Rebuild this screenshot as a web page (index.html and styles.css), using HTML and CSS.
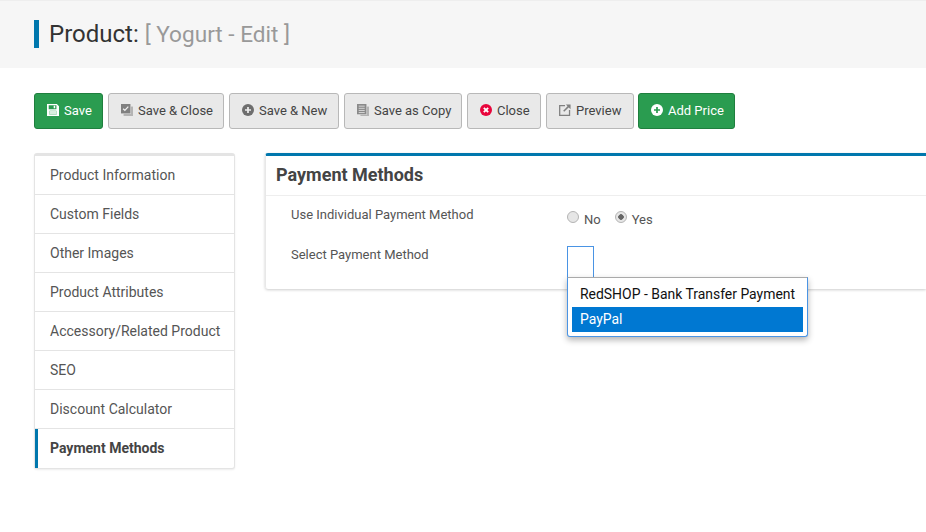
FILE: index.html
```html
<!DOCTYPE html>
<html lang="en">
<head>
    <meta charset="UTF-8">
    <meta name="viewport" content="width=device-width, initial-scale=1.0">
    <title>Product: Yogurt - Edit</title>
    <link rel="stylesheet" href="styles.css">
</head>
<body>
    <header class="page-head">
        <h1 class="page-title">Product: <small>[ Yogurt - Edit ]</small></h1>
    </header>

    <div class="toolbar">
        <button class="btn btn-green btn-save">
            <svg class="ico" viewBox="0 0 14 14"><path fill="#fff" fill-rule="evenodd" d="M0 0h11.500L14 2.500V14H0zM2 1.500v4.500h9V1.500zM3 8v4.500h8V8z"/><path fill="#fff" d="M7.800 2h1.800v3H7.800z"/><path fill="#d8efdf" d="M3 8h8v4.500H3z"/></svg>
            Save
        </button>
        <button class="btn btn-save-close">
            <svg class="ico" viewBox="0 0 14 14"><path fill="#b4b4b4" d="M3 3h11v11H3z"/><path fill="#e9e9e9" d="M0 0h11.500v11.500H0z"/><path fill="#808080" d="M0 0h11v11H0z"/><path fill="none" stroke="#f0f0f0" stroke-width="1.500" d="M2.500 5.500l2 2 4-4.500"/></svg>
            Save &amp; Close
        </button>
        <button class="btn btn-save-new">
            <svg class="ico" viewBox="0 0 14 14"><circle cx="7" cy="7" r="7" fill="#6e6e6e"/><path fill="#eee" d="M6 3.500h2V6h2.500v2H8v2.500H6V8H3.500V6H6z"/></svg>
            Save &amp; New
        </button>
        <button class="btn btn-copy">
            <svg class="ico" viewBox="0 0 14 14"><path fill="#b4b4b4" d="M4 3h10v11H4z"/><path fill="#e9e9e9" d="M0 0h11.500v12.500H0z"/><path fill="#8a8a8a" d="M0 0h11v12H0z"/><path stroke="#e4e4e4" d="M2 2.500h7M2 5h7M2 7.500h7M2 10h7"/></svg>
            Save as Copy
        </button>
        <button class="btn btn-close">
            <svg class="ico" viewBox="0 0 14 14"><circle cx="7" cy="7" r="7" fill="#e8063c"/><path stroke="#fff" stroke-width="2.200" d="M4.500 4.500l5 5M9.500 4.500l-5 5"/></svg>
            Close
        </button>
        <button class="btn btn-preview">
            <svg class="ico" viewBox="0 0 14 14"><path fill="none" stroke="#808080" stroke-width="1.500" d="M7 1.800H.8v11.500h11.500V7"/><path fill="none" stroke="#808080" stroke-width="1.800" d="M5.500 8.500L11.500 2.500"/><path fill="#808080" d="M8 .5h5.500V6z"/></svg>
            Preview
        </button>
        <button class="btn btn-green btn-price">
            <svg class="ico" viewBox="0 0 14 14"><circle cx="7" cy="7" r="7" fill="#fff"/><path fill="#2a9c50" d="M6 3.500h2V6h2.500v2H8v2.500H6V8H3.500V6H6z"/></svg>
            Add Price
        </button>
    </div>

    <main class="content">
        <ul class="tabs">
            <li>Product Information</li>
            <li>Custom Fields</li>
            <li>Other Images</li>
            <li>Product Attributes</li>
            <li>Accessory/Related Product</li>
            <li>SEO</li>
            <li>Discount Calculator</li>
            <li class="active">Payment Methods</li>
        </ul>

        <section class="panel">
            <h2 class="panel-title">Payment Methods</h2>
            <div class="panel-body">
                <div class="row row-radio">
                    <label class="row-label">Use Individual Payment Method</label>
                    <div class="radios">
                        <span class="radio"></span><span class="radio-text">No</span>
                        <span class="radio checked"></span><span class="radio-text">Yes</span>
                    </div>
                </div>
                <div class="row">
                    <label class="row-label">Select Payment Method</label>
                    <div class="select-wrap">
                        <div class="select-box"></div>
                        <ul class="dropdown">
                            <li>RedSHOP - Bank Transfer Payment</li>
                            <li class="selected">PayPal</li>
                        </ul>
                    </div>
                </div>
            </div>
        </section>
    </main>
</body>
</html>
```

FILE: styles.css
```css
* {
    box-sizing: border-box;
}

html, body {
    height: 532px;
    overflow: hidden;
}

body {
    margin: 0;
    background: #fff;
    font-family: Roboto, "Liberation Sans", sans-serif;
    font-size: 14px;
    color: #555;
}

/* header */
.page-head {
    height: 68px;
    background: #f6f6f6;
    border-top: 1px solid #eee;
    padding: 19px 34px 0;
}

.page-title {
    margin: 0;
    height: 28px;
    border-left: 5px solid #0077ad;
    padding-left: 10px;
    font-size: 24px;
    font-weight: 400;
    line-height: 28px;
    color: #333;
}

.page-title small {
    font-size: 22.6px;
    color: #999;
}

/* toolbar */
.toolbar {
    display: flex;
    margin: 25px 0 0 34px;
    height: 36px;
}

.btn {
    display: flex;
    align-items: center;
    gap: 5px;
    height: 36px;
    margin-right: 5px;
    padding: 0 0 2px 12px;
    background: #e9e9e9;
    border: 1px solid #b8b8b8;
    border-radius: 3px;
    font-family: inherit;
    font-size: 13px;
    color: #444;
}

.btn-green {
    background: #2a9c50;
    border-color: #1f7f3e;
    color: #fff;
}

.btn-save { width: 69px; }
.btn-save-close { width: 116px; }
.btn-save-new { width: 110px; }
.btn-copy { width: 118px; }
.btn-close { width: 74px; }
.btn-preview { width: 88px; margin-right: 4px; }
.btn-price { width: 97px; margin-right: 0; }

.ico {
    width: 12px;
    height: 12px;
    flex: none;
}

/* main area */
.content {
    display: flex;
    align-items: flex-start;
    margin: 24px 0 0 34px;
}

.tabs {
    width: 201px;
    margin: 0 30px 0 0;
    padding: 0;
    list-style: none;
    background: #fff;
    border-top: 3px solid #e4e4e4;
    border-right: 1px solid #e4e4e4;
    border-left: 1px solid #e4e4e4;
    border-bottom: 1px solid #e4e4e4;
    border-radius: 3px;
    box-shadow: 0 1px 2px rgba(0, 0, 0, 0.08);
}

.tabs li {
    height: 39px;
    padding-left: 15px;
    line-height: 38px;
    border-bottom: 1px solid #e4e4e4;
    color: #555;
}

.tabs li:last-child {
    border-bottom: 0;
}

.tabs .active {
    padding-left: 12px;
    border-left: 3px solid #0077ad;
    font-weight: 700;
    color: #444;
}

.panel {
    flex: 1;
    height: 136px;
    border-top: 3px solid #0077ad;
    border-left: 1px solid #e8e8e8;
    border-radius: 3px 0 0 3px;
    box-shadow: 0 1px 3px rgba(0, 0, 0, 0.2);
}

.panel-title {
    margin: 0;
    height: 40px;
    padding-left: 10px;
    border-bottom: 1px solid #eee;
    font-size: 18px;
    font-weight: 700;
    line-height: 37px;
    color: #444;
}

.panel-body {
    padding-top: 9px;
}

.row {
    display: flex;
    padding-left: 25px;
}

.row-radio {
    height: 40px;
}

.row-label {
    width: 276px;
    font-size: 13px;
    line-height: 19px;
    color: #555;
}

.radios {
    display: flex;
    align-items: flex-start;
    font-size: 13px;
    line-height: 19px;
    padding-top: 6px;
}

.radio {
    width: 12px;
    height: 12px;
    margin: 0 5px 0 0;
    border: 1px solid #b4b4b4;
    border-radius: 50%;
    background: #e6e6e6;
}

.radio.checked {
    background: radial-gradient(circle, #666 0, #666 2.5px, #e6e6e6 3px);
}

.radio-text {
    margin-right: 14px;
    margin-top: -1px;
}

.select-wrap {
    position: relative;
    margin-top: 1px;
}

.select-box {
    width: 27px;
    height: 32px;
    border: 1px solid #4a94e4;
    background: #fff;
}

.dropdown {
    position: absolute;
    top: 31px;
    left: 0;
    width: 241px;
    margin: 0;
    padding: 4px;
    list-style: none;
    background: #fff;
    border: 1px solid #4a94e4;
    border-top-color: #aaa;
    border-radius: 0 0 3px 3px;
    box-shadow: 0 3px 6px rgba(0, 0, 0, 0.3);
    font-size: 13.95px;
    color: #111;
}

.dropdown li {
    height: 25px;
    padding-left: 8px;
    line-height: 25px;
    white-space: nowrap;
}

.dropdown .selected {
    background: #0078d2;
    color: #fff;
}
```
